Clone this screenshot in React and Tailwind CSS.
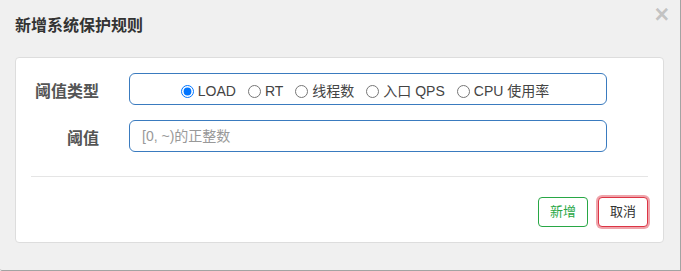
import React from 'react';

const radios = [
  { label: 'LOAD', checked: true },
  { label: 'RT' },
  { label: '线程数' },
  { label: '入口 QPS' },
  { label: 'CPU 使用率' },
];

const App = () => {
  return (
    <div className="w-[681px] h-[271px] bg-[#f0f0f0] border-r border-b border-[#a3a3a3] rounded-bl-[2px] font-['Liberation_Sans','Noto_Sans_CJK_SC',sans-serif] text-[#333]">
      {/* Header */}
      <div className="relative h-[57px] pl-[15px] pt-[15px]">
        <h4 className="text-[16px] leading-[22px] font-bold text-[#333]">新增系统保护规则</h4>
        <button className="absolute right-[11px] top-[0px] text-[25px] leading-[28px] font-bold text-black/20">×</button>
      </div>

      {/* Body */}
      <div className="ml-[15px] w-[649px] h-[186px] bg-white border border-[#dddddd] rounded-[4px] pt-[15px] px-[15px]">
        <div className="flex flex-col gap-[15px]">
          <div className="flex items-center">
            <label className="w-[68px] text-right text-[16px] font-bold text-[#555] pt-[5px]">阈值类型</label>
            <div className="ml-[30px] w-[478px] h-[32px] border border-[#3a7bbf] rounded-[6px] flex items-center justify-center gap-[12px] pt-[4px] pr-[6px] text-[14px] text-[#444]">
              {radios.map((r) => (
                <label key={r.label} className="flex items-center gap-[4px]">
                  <input type="radio" name="grade" defaultChecked={r.checked} className="m-0 w-[13px] h-[13px]" />
                  <span>{r.label}</span>
                </label>
              ))}
            </div>
          </div>
          <div className="flex items-center">
            <label className="w-[68px] text-right text-[16px] font-bold text-[#555] pt-[5px]">阈值</label>
            <input
              type="text"
              placeholder="[0, ~)的正整数"
              className="ml-[30px] w-[478px] h-[32px] border border-[#3a7bbf] rounded-[6px] px-[12px] text-[14px] placeholder:text-[#999] outline-none"
            />
          </div>
        </div>

        <div className="mt-[24px] border-t border-[#e5e5e5]" />

        <div className="flex justify-end gap-[10px] mt-[20px]">
          <button className="w-[50px] h-[30px] border border-[#28a745] rounded-[4px] text-[13px] text-[#28a745] bg-white">新增</button>
          <button className="w-[50px] h-[30px] border border-[#dc3545] rounded-[4px] text-[13px] text-[#333] bg-white shadow-[0_0_0_2px_rgba(220,53,69,0.45)]">取消</button>
        </div>
      </div>
    </div>
  );
};

export default App;
